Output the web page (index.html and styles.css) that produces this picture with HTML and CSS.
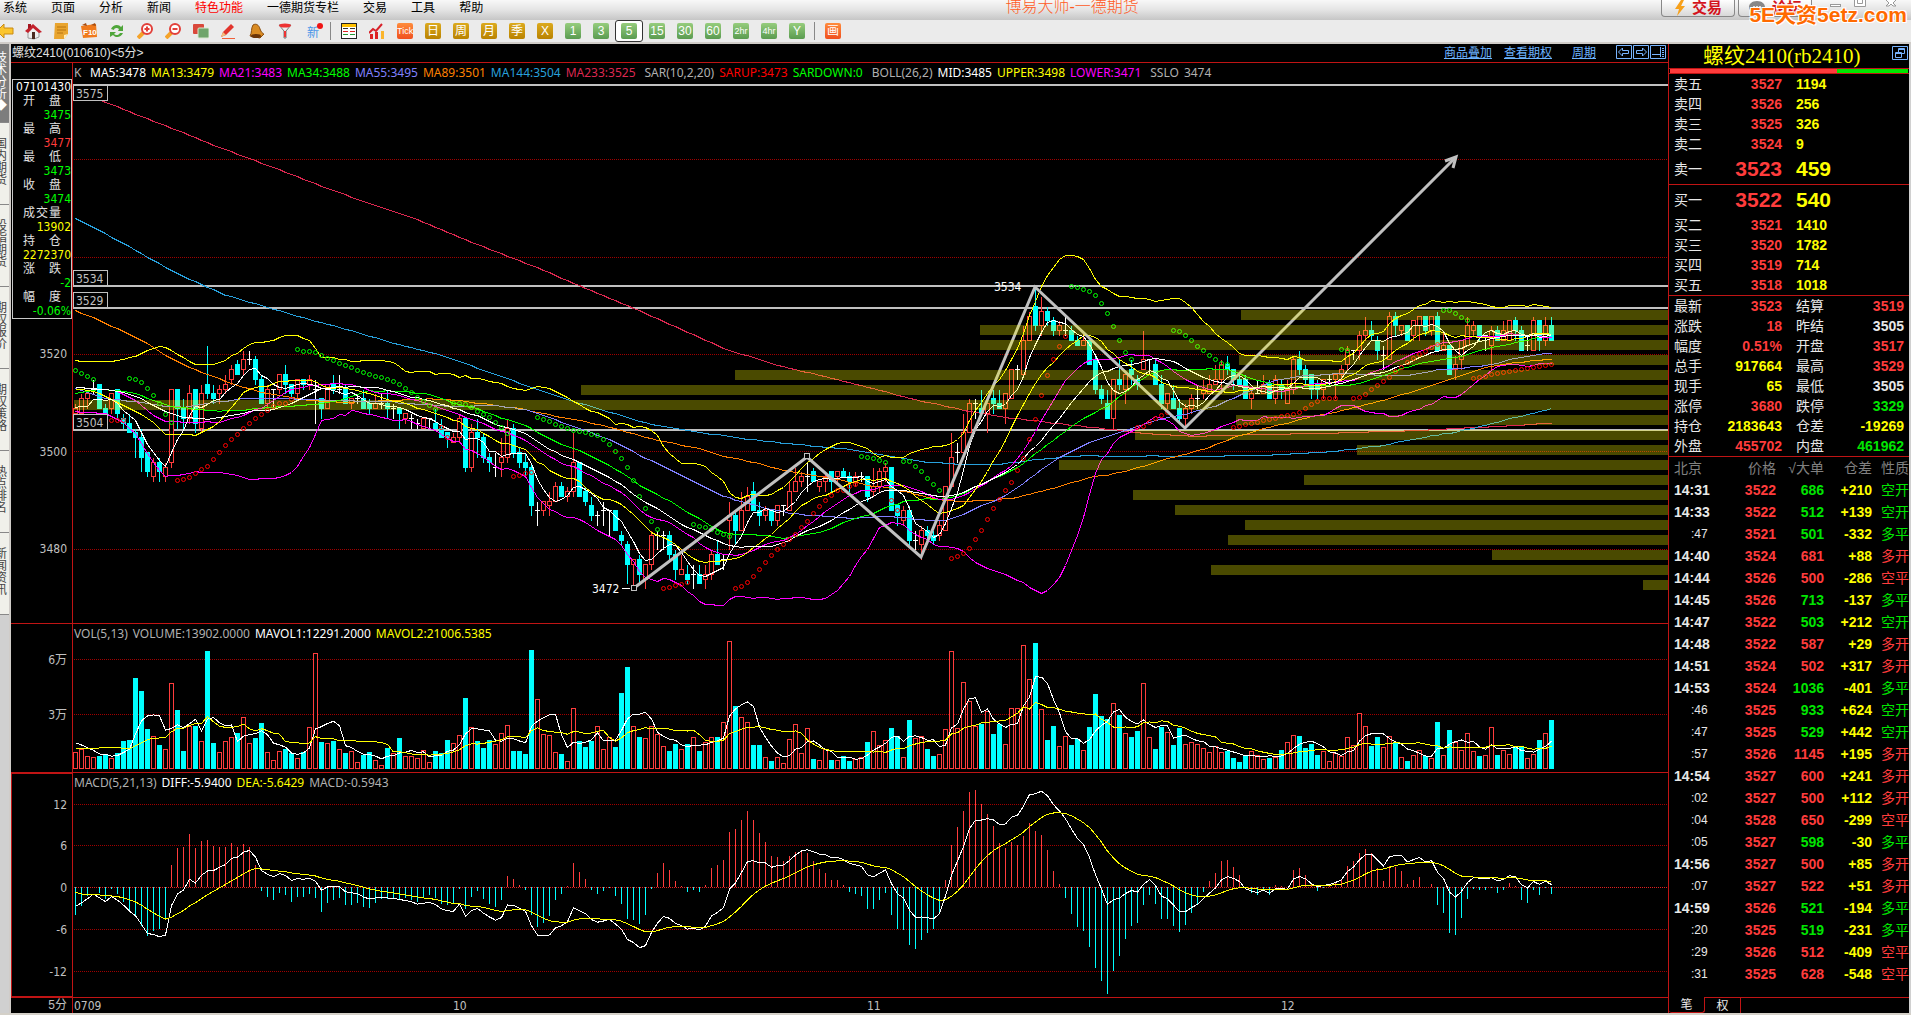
FILE: index.html
```html
<!DOCTYPE html>
<html lang="zh-CN">

<head>
	<meta charset="UTF-8">
	<meta name="viewport" content="width=device-width, initial-scale=1.0">
	<title>博易大师-一德期货</title>
	<link rel="stylesheet" href="styles.css">
</head>

<body>
	<header class="menubar">
		<nav class="menu">
			<a href="#">系统</a>
			<a href="#">页面</a>
			<a href="#">分析</a>
			<a href="#">新闻</a>
			<a href="#" class="hot">特色功能</a>
			<a href="#">一德期货专栏</a>
			<a href="#">交易</a>
			<a href="#">工具</a>
			<a href="#">帮助</a>
		</nav>
		<div class="app-title">博易大师-一德期货</div>
		<div class="window-tools">
			<button class="trade-btn" type="button">
				<svg width="12" height="16" viewBox="0 0 12 16"><path d="M7 0L1 9h4l-2 7 8-10H7l3-6z" fill="#f7a11b"/></svg>交易
			</button>
			<button class="trade-btn" type="button">
				<svg width="18" height="16" viewBox="0 0 18 16"><path d="M9 1c5 0 8 3 8 6s-3 6-7 6l-4 3v-3C3 12 1 10 1 7c0-3 3-6 8-6z" fill="#888"/><path d="M5 7h2M8 7h2M11 7h2" stroke="#ddd" stroke-width="2"/></svg>论坛
			</button>
			<svg class="win-icons" width="84" height="12" viewBox="0 0 84 12" fill="#fff" stroke="#999"><rect x="5.500" y="4.500" width="10" height="2"/><path d="M29.500 0v6.500h11V0M32.500 0v3.500h5V0"/><path d="M61 0l3 3-3 3h3l2-2 2 2h3l-3-3 3-3"/></svg>
		</div>
		<div class="watermark">5E天资5etz.com</div>
	</header>

	<div class="toolbar">
		<button type="button" class="first" title="后退"><svg width="18" height="16" viewBox="0 0 18 16"><path d="M1 8l7-7v4h9v6H8v4z" fill="#fbc52d" stroke="#c98a12"/></svg></button>
		<button type="button" title="首页"><svg width="17" height="17" viewBox="0 0 17 17"><path d="M3 8v7l6 1 5-2V8L8 3z" fill="#eee" stroke="#999"/><path d="M0 8l8-7 9 8-3 1-6-5-5 5z" fill="#c3222c"/><path d="M3 1h3v3L3 6z" fill="#a31620"/><path d="M7 9h3v7H7z" fill="#4a2a20"/></svg></button>
		<button type="button" title="便笺"><svg width="16" height="16" viewBox="0 0 16 16"><path d="M2 0h13v11l-4 5H1z" fill="#e9a52f"/><path d="M4 4h9M4 7h9M4 10h6" stroke="#b87410"/><path d="M11 16v-4l4-1z" fill="#fff0c0"/></svg></button>
		<button type="button" title="F10"><svg width="18" height="16" viewBox="0 0 18 16"><path d="M1 3l15-2 1 13-14 1z" fill="#f07a1c"/><path d="M2 2l4-2 1 3M11 2l4-2 1 3" fill="#a64c10"/><text x="3" y="12" class="f10">F10</text></svg></button>
		<button type="button" title="刷新"><svg width="16" height="16" viewBox="0 0 16 16"><path d="M2 6c2-5 8-5 10-2l2-2v6H9l1-2C8 4 5 5 5 7zM14 10c-2 5-8 5-10 2l-3 2V9h6l-2 2c2 2 5 1 6-1z" fill="#4fa63a"/></svg></button>
		<button type="button" title="放大"><svg width="16" height="16" viewBox="0 0 16 16"><path d="M7 9l-6 6" stroke="#f5a32a" stroke-width="4"/><circle cx="10" cy="6" r="5" fill="#fff" stroke="#e2403a" stroke-width="2"/><path d="M7.500 6h5M10 3.500v5" stroke="#e2403a" stroke-width="2"/></svg></button>
		<button type="button" title="缩小"><svg width="16" height="16" viewBox="0 0 16 16"><path d="M7 9l-6 6" stroke="#f5a32a" stroke-width="4"/><circle cx="10" cy="6" r="5" fill="#fff" stroke="#e2403a" stroke-width="2"/><path d="M7.500 6h5" stroke="#e2403a" stroke-width="2"/></svg></button>
		<button type="button" title="叠加"><svg width="16" height="16" viewBox="0 0 16 16"><rect x="0" y="1" width="11" height="10" rx="1" fill="#d9483b"/><rect x="5" y="5" width="11" height="10" rx="1" fill="#6fa56b" stroke="#d8e8d0"/></svg></button>
		<button type="button" title="画线"><svg width="16" height="16" viewBox="0 0 16 16"><path d="M2 9l8-8 3 3-8 8-5 2z" fill="#e2342c"/><path d="M0 14l2-5 3 3z" fill="#f2c07c"/><path d="M1 15.500h13" stroke="#f0603a"/></svg></button>
		<button type="button" title="预警"><svg width="16" height="16" viewBox="0 0 16 16"><path d="M4 2c3-2 6 0 7 4 1 3 3 5 4 5l-4 4-10-2c2-3 1-8 3-11z" fill="#d98b22" stroke="#8a4c0c"/><ellipse cx="7" cy="13" rx="5" ry="2" fill="#6a3408"/></svg></button>
		<button type="button" title="筛选"><svg width="16" height="16" viewBox="0 0 16 16"><path d="M2 2h12L9 8v7H7V8z" fill="#eee" stroke="#777"/><ellipse cx="8" cy="2.500" rx="6" ry="2" fill="#e33"/><path d="M7 8h2v6H7z" fill="#e33"/></svg></button>
		<button type="button" title="新闻" class="news">新</button>
		<span class="sep"></span>
		<button type="button" title="报价"><svg width="16" height="16" viewBox="0 0 16 16"><rect x=".5" y=".5" width="15" height="15" fill="#fff" stroke="#222"/><path d="M1 2.500h14" stroke="#ffc000" stroke-width="3"/><path d="M2 5.500h5M9 5.500h5" stroke="#333"/><path d="M2 8.500h5M9 8.500h5" stroke="#d22"/><path d="M2 11.500h5M9 11.500h5" stroke="#293"/></svg></button>
		<button type="button" title="走势"><svg width="16" height="16" viewBox="0 0 16 16"><path d="M1 11h3v5H1zM6 9h3v7H6z" fill="#d22"/><path d="M12 8h3v8h-3z" fill="#fbb52d"/><path d="M0 10l4-4 3 2 6-7" stroke="#d8222a" stroke-width="2" fill="none"/></svg></button>
		<button type="button"><i class="tile tile-red small">Tick</i></button>
		<button type="button"><i class="tile tile-gold">日</i></button>
		<button type="button"><i class="tile tile-gold">周</i></button>
		<button type="button"><i class="tile tile-gold">月</i></button>
		<button type="button"><i class="tile tile-gold">季</i></button>
		<button type="button"><i class="tile tile-gold">X</i></button>
		<button type="button"><i class="tile tile-green">1</i></button>
		<button type="button"><i class="tile tile-green">3</i></button>
		<button type="button" class="on"><i class="tile tile-green">5</i></button>
		<button type="button"><i class="tile tile-green">15</i></button>
		<button type="button"><i class="tile tile-green">30</i></button>
		<button type="button"><i class="tile tile-green">60</i></button>
		<button type="button"><i class="tile tile-green small">2hr</i></button>
		<button type="button"><i class="tile tile-green small">4hr</i></button>
		<button type="button"><i class="tile tile-green">Y</i></button>
		<span class="sep"></span>
		<button type="button"><i class="tile tile-red">画</i></button>
	</div>

	<main class="workspace">
		<nav class="side-tabs">
			<a href="#" class="active"><span>技术分析◆</span></a>
			<a href="#"><span>国内期货</span></a>
			<a href="#"><span>股指期货</span></a>
			<a href="#"><span>期权报价</span></a>
			<a href="#"><span>期权策略</span></a>
			<a href="#"><span>热点排名</span></a>
			<a href="#"><span>新闻资讯</span></a>
		</nav>

		<section class="charts">
			<div class="chart-title">
				<span>螺纹2410(010610)&lt;5分&gt;</span>
				<div class="chart-links">
					<a href="#">商品叠加</a>
					<a href="#">查看期权</a>
					<a href="#" class="cycle">周期</a>
					<svg width="51" height="16" viewBox="0 0 51 16" fill="none" stroke="#78b4ff"><path d="M.5 1.500h15v13H.5zM17.500 1.500h15v13h-15zM34.500 1.500h15v13h-15z"/><path d="M2.500 8l4-4v2.500h6v3h-6V12zM30.500 8l-4-4v2.500h-6v3h6V12zM36 10.500h8M44.500 3v10"/><path d="M46 4.500h2M46 6.500h2M46 8.500h2M46 10.500h2M46 12.500h2"/></svg>
				</div>
			</div>

			<div class="panel main-panel">
				<div class="axis">
					<div class="data-window" id="dataWindow"></div>
					<svg id="priceAxis" viewBox="11 319 61 304" preserveAspectRatio="none"></svg>
				</div>
				<div class="plot">
					<div class="legend">
						<span class="gray k">K</span>
						<span class="white">MA5:3478</span>
						<span class="yellow">MA13:3479</span>
						<span class="magenta">MA21:3483</span>
						<span class="green">MA34:3488</span>
						<span class="violet">MA55:3495</span>
						<span class="orange">MA89:3501</span>
						<span class="blue">MA144:3504</span>
						<span class="crimson">MA233:3525</span>
						<span class="gray group">SAR(10,2,20)</span>
						<span class="red">SARUP:3473</span>
						<span class="green">SARDOWN:0</span>
						<span class="gray group">BOLL(26,2)</span>
						<span class="white">MID:3485</span>
						<span class="yellow">UPPER:3498</span>
						<span class="magenta">LOWER:3471</span>
						<span class="gray group">SSLO</span>
						<span class="gray">3474</span>
					</div>
					<svg id="priceChart" viewBox="73 83 1595 540" preserveAspectRatio="none"></svg>
				</div>
			</div>

			<div class="panel vol-panel">
				<div class="axis">
					<svg id="volAxis" viewBox="11 624 61 148" preserveAspectRatio="none"></svg>
				</div>
				<div class="plot">
					<div class="legend">
						<span class="gray">VOL(5,13)</span>
						<span class="gray">VOLUME:13902.0000</span>
						<span class="white">MAVOL1:12291.2000</span>
						<span class="yellow">MAVOL2:21006.5385</span>
					</div>
					<svg id="volChart" viewBox="73 644 1595 128" preserveAspectRatio="none"></svg>
				</div>
			</div>

			<div class="panel macd-panel">
				<div class="axis selected">
					<svg id="macdAxis" viewBox="11 773 61 224" preserveAspectRatio="none"></svg>
				</div>
				<div class="plot">
					<div class="legend">
						<span class="gray">MACD(5,21,13)</span>
						<span class="white">DIFF:-5.9400</span>
						<span class="yellow">DEA:-5.6429</span>
						<span class="gray">MACD:-0.5943</span>
					</div>
					<svg id="macdChart" viewBox="73 793 1595 204" preserveAspectRatio="none"></svg>
				</div>
			</div>

			<div class="time-axis">
				<div class="axis">5分</div>
				<svg id="timeAxis" viewBox="73 998 1595 15" preserveAspectRatio="none"></svg>
			</div>
		</section>

		<aside class="quote">
			<div class="quote-title">
				螺纹2410(rb2410)
				<svg class="restore" width="16" height="14" viewBox="0 0 16 14" fill="none" stroke="#78b4ff"><path d="M.5.5h15v13H.5zM6.500 2.500h6v5h-6zM3.500 6.500h6v5h-6zM6.500 3.500h6M3.500 7.500h6"/></svg>
			</div>
			<div class="ratio"><span class="ratio-sell"></span><span class="ratio-buy"></span></div>
			<table class="book" id="asks"></table>
			<table class="book" id="bids"></table>
			<table class="stats" id="stats"></table>
			<table class="ticks">
				<thead>
					<tr><th>北京</th><th>价格</th><th>√大单</th><th>仓差</th><th>性质</th></tr>
				</thead>
				<tbody id="ticks"></tbody>
			</table>
			<div class="quote-tabs">
				<button type="button" class="active">笔</button>
				<button type="button">权</button>
			</div>
		</aside>
	</main>

	<script src="chart.js"></script>
</body>

</html>
```
FILE: styles.css
```css
* {
	box-sizing: border-box;
}

body {
	margin: 0;
	height: 100vh;
	display: flex;
	flex-direction: column;
	overflow: hidden;
	background: #d4d0c8;
	font-family: "Liberation Sans", "Noto Sans CJK SC", sans-serif;
	font-size: 12px;
	color: #000;
}

a {
	color: inherit;
	text-decoration: none;
}

button {
	font: inherit;
	padding: 0;
	border: none;
	background: none;
	cursor: pointer;
}

svg {
	display: block;
}

/* top menu */
.menubar {
	position: relative;
	flex: none;
	height: 20px;
	display: flex;
	justify-content: space-between;
	background: linear-gradient(#f8f8f8, #e4e4e4 50%, #c6c6c6);
}

.menu {
	display: flex;
	gap: 24px;
	padding-left: 3px;
	line-height: 16px;
	white-space: nowrap;
}

.menu .hot {
	color: #f00;
}

.app-title {
	font-size: 16px;
	line-height: 14px;
	font-weight: 300;
	color: #ff5a1e;
}

.window-tools {
	display: flex;
	gap: 3px;
	width: 250px;
}

.trade-btn {
	display: flex;
	justify-content: center;
	align-items: center;
	gap: 6px;
	width: 74px;
	height: 17px;
	border: 1px solid #888;
	border-top: none;
	border-radius: 0 0 4px 4px;
	background: linear-gradient(#fff, #d8d8d8);
	color: #d4141c;
	font-size: 15px;
	line-height: 14px;
	font-weight: bold;
}

.win-icons {
	margin-left: 10px;
}

.watermark {
	position: absolute;
	right: 4px;
	top: 4px;
	z-index: 2;
	font-size: 21px;
	line-height: 22px;
	font-weight: bold;
	color: #ff6a00;
	text-shadow: 1px 1px #fff, -1px -1px #fff, 1px -1px #fff, -1px 1px #fff;
}

/* icon toolbar */
.toolbar {
	flex: none;
	height: 24px;
	display: flex;
	align-items: center;
	overflow: hidden;
	background: #ebebeb;
	border-bottom: 2px solid #d0ccc8;
}

.toolbar button {
	flex: none;
	width: 28px;
	height: 22px;
	display: flex;
	justify-content: center;
	align-items: center;
}

.toolbar .first {
	margin-left: -9px;
}

.toolbar .on {
	border: 1px solid #333;
	border-radius: 3px;
	background: #fff;
}

.toolbar .news {
	position: relative;
	color: #4a96e8;
}

.toolbar .news::after {
	content: "";
	position: absolute;
	right: 4px;
	top: 3px;
	width: 6px;
	height: 6px;
	border-radius: 50%;
	background: #f01414;
}

.f10 {
	font: bold 8px "Liberation Sans", sans-serif;
	fill: #fff;
}

.sep {
	width: 8px;
	height: 18px;
	background: linear-gradient(#888, #888) 3px 0 / 1px 100% no-repeat;
}

.tile {
	width: 16px;
	height: 16px;
	border-radius: 2px;
	font-style: normal;
	font-size: 12px;
	line-height: 16px;
	text-align: center;
	color: #fff;
}

.tile.small {
	font-size: 9px;
}

.tile-red {
	background: linear-gradient(#ff8c3c, #f0501e);
}

.tile-gold {
	background: linear-gradient(#dcaa1e, #b98200);
}

.tile-green {
	background: linear-gradient(#96cd7d, #5a9b50);
}

/* workspace */
.workspace {
	flex: 1;
	min-height: 0;
	display: flex;
	margin-bottom: 2px;
}

.side-tabs {
	flex: none;
	width: 11px;
	overflow: hidden;
	background: #d0d0d0;
	border-right: 2px solid #d0ccc8;
}

.side-tabs a {
	display: block;
	height: 82px;
	padding-top: 15px;
	background: #f0f0ea;
	border-bottom: 1px solid #888;
	color: #444;
}

.side-tabs span {
	display: block;
	width: 12px;
	margin-left: -5px;
	line-height: 12px;
	word-break: break-all;
}

.side-tabs .active {
	height: 79px;
	padding-top: 8px;
	background: #7d7d7d;
	color: #fff;
}

.charts {
	flex: 1;
	min-width: 0;
	display: flex;
	flex-direction: column;
	background: #000;
	color: #c0c0c0;
}

.chart-title {
	flex: none;
	height: 19px;
	display: flex;
	justify-content: space-between;
	padding: 0 1px;
	border-bottom: 1px solid #c01414;
	line-height: 18px;
	white-space: nowrap;
}

.chart-title span {
	color: #e0e0e0;
}

.chart-links {
	display: flex;
	gap: 12px;
	color: #6eb4ff;
}

.chart-links a {
	text-decoration: underline;
}

.chart-links .cycle {
	margin: 0 8px;
}

.panel {
	display: flex;
	min-height: 0;
	border-bottom: 1px solid #c01414;
}

.main-panel {
	flex: 560 1 0;
}

.vol-panel {
	flex: 148 1 0;
}

.macd-panel {
	flex: 224 1 0;
}

.axis {
	flex: none;
	width: 62px;
	display: flex;
	flex-direction: column;
	border-right: 1px solid #c01414;
}

.axis.selected {
	outline: 1px solid #c01414;
	outline-offset: -1px;
}

.axis svg,
.plot svg {
	flex: 1 1 0;
	width: 100%;
	min-height: 0;
	overflow: visible;
}

.plot {
	flex: 1;
	min-width: 0;
	display: flex;
	flex-direction: column;
}

.legend {
	flex: none;
	height: 20px;
	display: flex;
	gap: 5px;
	overflow: hidden;
	padding-left: 1px;
	font-family: "Noto Sans", "Open Sans", sans-serif;
	line-height: 20px;
	white-space: nowrap;
}

.legend .k {
	width: 11px;
}

.legend .group {
	margin-left: 4px;
}

.gray { color: #b0b0b0; }
.white { color: #fff; }
.yellow { color: #ff0; }
.magenta { color: #f0f; }
.green { color: #0f0; }
.violet { color: #8080ff; }
.orange { color: #ff8000; }
.blue { color: #28a0dc; }
.crimson { color: #dc2850; }
.red { color: #f00; }

.data-window {
	flex: none;
	margin: 16px 0 0 1px;
	height: 240px;
	border: 1px solid #c8c8c8;
	font-family: "DejaVu Sans Condensed", "DejaVu Sans", "Noto Sans CJK SC", sans-serif;
	font-stretch: condensed;
	line-height: 14px;
	text-align: right;
}

.data-window .stamp {
	color: #fff;
}

.data-window .name {
	display: flex;
	justify-content: space-between;
	width: 38px;
	margin-left: 10px;
	color: #e0e0e0;
}

.time-axis {
	flex: none;
	height: 15px;
	display: flex;
}

.time-axis .axis {
	padding-right: 5px;
	line-height: 15px;
	text-align: right;
}

.time-axis svg {
	flex: 1;
	height: 15px;
}

/* chart drawing */
.grid { stroke: #a00000; stroke-dasharray: 1 1; shape-rendering: crispEdges; }
.zero { stroke: #e02020; stroke-dasharray: 1 1; shape-rendering: crispEdges; }
.up { stroke: #ff3c3c; fill: #000; shape-rendering: crispEdges; }
.down { stroke: #0ff; fill: #0ff; shape-rendering: crispEdges; }
.flat { stroke: #fff; fill: none; shape-rendering: crispEdges; }
.line { fill: none; stroke-width: 1; shape-rendering: crispEdges; }
.sar { fill: none; stroke-width: 1; }
.level { stroke: #c0c0c0; stroke-width: 2; shape-rendering: crispEdges; }
.tag { fill: #000; stroke: #c0c0c0; shape-rendering: crispEdges; }
.profile { fill: #ff0; fill-opacity: 0.29; }
.zigzag { fill: none; stroke: #c0c0c0; stroke-width: 3; }
.num {
	font: 12px "DejaVu Sans Condensed", "DejaVu Sans", "Noto Sans CJK SC", sans-serif;
	font-stretch: condensed;
	fill: #c0c0c0;
}
.peak { fill: #fff; }

/* quote panel */
.quote {
	flex: none;
	width: 243px;
	display: flex;
	flex-direction: column;
	background: #000;
	border-left: 1px solid #c01414;
	border-right: 2px solid #d0d0d0;
	font-size: 14px;
	color: #e8e8e8;
}

.quote-title {
	position: relative;
	height: 24px;
	padding-left: 34px;
	font-family: "Liberation Serif", "Noto Sans CJK SC", serif;
	font-size: 21px;
	line-height: 24px;
	color: #ff0;
}

.restore {
	position: absolute;
	right: 1px;
	top: 2px;
}

.ratio {
	display: flex;
	height: 6px;
	padding: 0 1px;
	border-top: 1px solid #c01414;
	border-bottom: 1px solid #c01414;
}

.ratio-sell {
	flex: 168;
	background: #ff3c3c;
}

.ratio-buy {
	flex: 71;
	background: #00e600;
}

.quote table {
	width: 240px;
	table-layout: fixed;
	border-collapse: collapse;
	line-height: 20px;
}

.quote td,
.quote th {
	padding: 0;
	white-space: nowrap;
	font-weight: bold;
}

.quote .label {
	font-weight: normal;
}

.book td,
.stats td {
	height: 20px;
}

.book {
	border-bottom: 1px solid #c01414;
}

.book .label {
	width: 50px;
	padding-left: 5px;
	text-align: left;
}

.book .price {
	width: 63px;
	text-align: right;
	color: #ff3c3c;
}

.book .size {
	padding-left: 14px;
	color: #ff0;
}

.book .best td {
	height: 30px;
}

.book .best .price,
.book .best .size {
	font-size: 21px;
}

.stats {
	border-bottom: 1px solid #c01414;
}

.stats .label {
	width: 37px;
	padding-left: 5px;
	text-align: left;
}

.stats .label.second {
	width: 51px;
	padding-left: 14px;
}

.stats .value {
	text-align: right;
}

.stats .value:last-child {
	padding-right: 5px;
}

.ticks th,
.ticks td {
	height: 22px;
	text-align: right;
}

.ticks th {
	font-weight: normal;
	color: #808080;
}

.ticks th:nth-child(1) { width: 59px; }
.ticks th:nth-child(2) { width: 48px; }
.ticks th:nth-child(3) { width: 48px; }
.ticks th:nth-child(4) { width: 48px; }
.ticks th:nth-child(5) { width: 37px; }

.ticks th:first-child,
.ticks td:first-child {
	padding-left: 5px;
	text-align: left;
}

.ticks td.sec {
	padding-left: 22px;
	font-size: 12px;
	font-weight: normal;
}

.ticks td.kind {
	font-weight: normal;
}

.c-red { color: #ff3c3c; }
.c-green { color: #00e600; }
.c-yellow { color: #ff0; }
.c-white { color: #e8e8e8; }

.quote-tabs {
	height: 16px;
	margin-top: auto;
	display: flex;
	border-top: 1px solid #c01414;
}

.quote-tabs button {
	width: 36px;
	border-right: 1px solid #c01414;
	font-size: 12px;
	line-height: 14px;
	color: #e8e8e8;
}

.quote-tabs .active {
	margin-top: -1px;
	background: #000;
	border-bottom: 1px solid #c01414;
	border-radius: 0 0 3px 3px;
}
```
FILE: chart.js
```js
const NS = 'http://www.w3.org/2000/svg';

// open, high, low, close minus 3400, one group per bar
const raw = `108 110 108 109|108 112 108 111|111 113 109 112|113 115 112 113|114 114 109 109|109 110 108 108|109 112 108 112|113 113 107 108
107 108 105 106|106 108 104 104|104 105 99 103|103 105 96 99|100 100 95 96|95 99 94 98|98 99 94 96|95 98 94 97|98 113 97 113|113 113 105 109
109 111 105 107|107 114 106 112|113 113 104 106|105 114 104 112|114 122 111 112|112 114 110 111|112 114 110 113|113 116 112 114|115 118 114 117
118 119 116 116|117 121 116 119|119 121 118 119|119 120 114 115|115 116 110 110|110 114 109 113|113 113 109 113|113 116 112 116|116 118 112 114
114 114 111 112|112 115 111 115|115 115 113 114|114 116 113 115|113 115 106 113|111 111 107 109|109 114 109 114|114 116 112 113|113 116 112 113
113 114 110 110|110 111 109 111|111 112 110 111|111 113 109 109|110 111 108 109|109 112 109 110|110 112 109 110|110 113 107 109|109 110 107 109
109 109 105 108|107 108 106 108|107 108 105 107|106 107 105 106|105 107 105 107|107 107 105 107|106 109 105 105|105 107 103 103|104 104 101 103
102 104 102 103|103 108 102 107|107 107 96 97|97 106 96 104|104 107 99 103|103 104 98 99|99 100 96 98|97 100 95 97|98 103 95 99|99 107 98 105
105 106 99 100|100 101 97 98|98 100 95 97|97 98 87 89|88 90 85 88|88 90 87 90|89 92 87 90|90 94 90 93|93 94 91 91|91 93 90 92|92 104 91 98
98 98 91 91|92 93 89 90|89 91 86 87|87 88 85 87|88 90 85 88|88 88 83 88|88 88 84 84|83 84 81 82|81 82 73 77|77 78 72 78|78 79 73 75|74 77 72 77
77 84 76 83|83 84 80 83|83 84 80 83|83 84 78 79|79 80 74 76|75 79 75 76|75 77 73 74|75 77 72 75|75 77 73 73|74 77 72 75|75 80 74 79|79 82 77 77
78 79 76 78|86 90 80 87|87 88 81 84|84 92 84 88|88 93 88 91|92 94 88 88|88 90 85 87|87 89 86 88|88 88 85 86|86 89 85 89|89 89 87 89|88 94 88 92
92 97 92 94|94 96 93 95|95 98 92 95|96 97 94 94|93 94 92 94|94 96 92 95|96 96 92 94|95 96 94 96|96 97 95 95|95 96 92 94|94 96 93 95|95 96 94 95
95 95 90 91|92 97 91 93|93 97 92 96|96 98 94 97|97 97 88 88|89 89 85 87|86 89 85 88|88 89 81 82|82 84 80 82|81 85 78 84|84 85 82 83|83 84 81 82
83 86 82 85|84 93 84 93|93 104 93 99|100 102 98 100|100 108 100 104|104 111 104 110|110 111 107 110|109 113 108 108|108 110 104 110
111 113 108 110|110 113 109 109|109 112 106 112|111 117 111 117|117 118 115 117|116 126 116 123|123 129 123 128|130 134 125 126|126 132 124 129
129 130 126 127|127 128 124 125|125 127 124 126|125 128 124 125|125 126 123 123|123 124 122 122|122 125 122 123|123 123 118 118|119 120 112 113
113 114 110 111|110 113 107 107|107 115 105 115|115 119 113 114|113 116 110 116|117 119 114 116|115 116 113 114|117 125 117 119|119 119 116 119
118 119 114 114|114 116 109 110|110 112 109 112|111 114 109 109|109 111 106 107|107 110 105 109|109 112 108 111|111 114 109 111|112 115 111 113
112 116 112 114|114 118 114 115|115 119 112 118|118 120 116 117|117 117 113 115|115 116 114 114|115 116 111 111|111 113 109 112|112 115 112 112
112 116 112 114|114 115 111 111|111 116 110 115|114 115 111 113|110 115 110 113|113 120 112 119|119 121 116 117|117 118 114 115|116 116 111 113
114 115 111 113|113 115 111 115|115 116 114 115|115 116 111 116|116 118 115 117|118 122 117 121|121 121 119 121|121 125 119 124|124 128 123 125
125 127 123 124|123 124 119 121|120 122 117 120|119 129 119 128|128 129 124 126|125 126 124 126|126 126 123 123|124 127 123 127|126 128 123 128
128 128 124 125|125 128 124 128|128 129 121 121|121 125 121 122|122 122 116 116|117 120 115 118|119 123 117 123|122 128 122 126|125 127 124 126
126 126 123 124|124 124 121 124|122 126 117 125|125 126 123 123|123 127 123 125|123 127 123 127|127 128 123 125|125 126 121 121|122 124 121 122
121 128 121 127|127 127 121 123|123 128 122 126|126 128 123 123`;
const bars = raw.split(/[|\n]/).map(s => s.split(' ').map(Number));
const closes = bars.map(b => b[3]);

// tops of the volume bars, three units per pixel
const volTop = [427, 418, 437, 440, 438, 433, 443, 430, 394, 390, 204, 243, 357, 379, 405, 416, 220, 300, 423, 348, 348, 394, 123, 399, 427,
	394, 382, 370, 322, 398, 384, 339, 427, 449, 424, 417, 430, 445, 426, 352, 130, 396, 398, 394, 418, 429, 424, 457, 434, 426, 451, 466, 414,
	430, 384, 439, 439, 445, 421, 457, 423, 430, 390, 400, 376, 264, 352, 393, 414, 390, 403, 370, 346, 423, 423, 432, 120, 268, 373, 376, 427,
	432, 454, 295, 393, 411, 393, 349, 418, 381, 411, 249, 171, 349, 381, 385, 349, 371, 409, 423, 402, 418, 402, 382, 423, 397, 382, 381, 337,
	94, 288, 322, 337, 405, 405, 442, 453, 442, 460, 388, 343, 430, 355, 447, 451, 416, 450, 451, 438, 453, 447, 442, 396, 364, 406, 391, 354,
	378, 442, 330, 385, 379, 417, 438, 433, 358, 124, 355, 217, 274, 348, 342, 304, 372, 342, 403, 295, 295, 106, 208, 99, 298, 390, 348, 409,
	379, 405, 387, 421, 351, 252, 318, 327, 280, 315, 370, 381, 363, 220, 382, 417, 351, 367, 405, 354, 403, 397, 403, 415, 427, 409, 427, 423,
	444, 456, 435, 424, 436, 448, 444, 442, 420, 397, 376, 378, 414, 402, 435, 424, 454, 430, 439, 382, 406, 310, 349, 408, 381, 412, 379, 399,
	442, 453, 436, 421, 438, 445, 336, 436, 360, 397, 421, 370, 424, 438, 436, 352, 435, 421, 433, 411, 409, 445, 433, 390, 370, 330];

// SAR dots: first bar, then y of each dot
const sarDown = [[0, 370, 373, 376, 379], [9, 378, 379, 382, 388, 395, 403, 414, 422],
	[37, 349, 351, 351, 352, 355, 358, 360, 363, 365, 367, 370, 372, 374, 376, 377, 379, 381, 384, 388, 392, 397, 401, 405, 409],
	[63, 403, 403, 404, 407, 411, 414, 417, 422, 427, 433],
	[77, 417, 419, 421, 424, 426, 428, 430, 431, 432, 434, 435, 439, 444, 451, 458, 467, 480, 496, 508, 521, 529],
	[103, 524, 526, 527, 529, 532, 534, 536], [131, 456, 457, 458, 460, 462], [138, 461, 461, 466, 471, 478, 484, 490],
	[166, 286, 287, 289, 291, 295, 303, 313, 326, 340, 352, 359], [183, 330, 331, 335, 340, 346, 350, 355, 359, 363, 364],
	[211, 349, 350], [228, 310, 310, 313, 317, 320]];
const sarUp = [[6, 420, 420, 420], [17, 480, 479, 477, 473, 469, 466, 459, 452, 445, 439, 434, 428, 423, 418, 414, 410, 406, 403, 403, 399],
	[61, 427, 437], [73, 476, 475, 473, 472], [98, 588, 587, 585, 584, 582],
	[110, 588, 586, 582, 576, 569, 562, 555, 549, 544, 539, 534, 527, 521, 513, 506, 500, 495, 490, 490, 486, 484], [136, 500, 510],
	[146, 558, 556, 553, 548, 539, 530, 519, 508, 499, 490, 482, 470, 458, 439, 419, 395, 375, 359, 346, 336],
	[177, 427, 426, 422, 418, 415, 412],
	[193, 427, 426, 424, 423, 422, 420, 419, 418, 416, 415, 414, 412, 408, 404, 401, 398, 398, 398],
	[213, 398, 397, 394, 389, 385, 381, 377, 371, 367, 362, 358, 354, 351, 347, 344],
	[233, 378, 377, 376, 374, 373, 372, 371, 370, 369, 368, 367, 366, 365, 364]];

// averages before enough bars are loaded: bar, value pairs
const lead = {
	ma5: [[0, 109.2], [2, 109.5], [3, 110.8]],
	ma13: [[0, 113], [3, 112.6], [7, 110.2], [9, 109], [11, 107.7]],
	ma21: [[0, 113.3], [4, 113], [7, 112.5], [10, 110.6], [13, 107.5], [15, 106.4], [19, 106.1]],
	ma34: [[0, 112], [4, 113], [8, 112.6], [10, 112.1], [13, 110.6], [16, 109.4], [20, 108.9], [24, 108.5], [28, 108.7], [32, 109.2]],
	ma55: [[0, 113.2], [5, 111], [10, 110.4], [15, 109.5], [18, 109.3], [24, 110.4], [28, 111], [36, 111], [45, 110.6], [53, 110.4]],
	ma89: [[0, 129.1], [3, 127.6], [9, 124.3], [13, 121.6], [15, 119.9], [19, 117.5], [23, 115.5], [27, 113.8], [31, 112.3], [36, 111.2],
		[41, 110.4], [46, 110.3], [53, 110.7], [59, 111], [64, 110.6], [69, 109.8], [74, 109], [81, 107.2], [87, 105.8]],
	ma144: [[0, 148.1], [8, 142.9], [15, 138], [21, 134.4], [25, 132.3], [33, 129.4], [38, 127.6], [45, 125.3], [54, 122.1], [61, 119.9],
		[68, 116.9], [75, 113.8], [81, 111.2], [90, 107.9], [96, 105.7], [104, 104.1], [114, 102.4], [128, 100.7], [134, 99.5], [142, 98]],
	ma233: [[0, 174.5], [5, 171.9], [17, 166.1], [24, 162.6], [30, 159.9], [43, 153.7], [57, 147.8], [66, 143.2], [77, 137.9], [84, 134.2],
		[93, 129.6], [101, 125.2], [108, 121.4], [116, 118.2], [124, 115.8], [131, 113.7], [140, 110.8], [149, 108.4], [155, 107.2],
		[163, 106], [171, 104.9], [177, 104], [186, 103.3], [199, 103.7], [211, 104], [224, 104.5], [230, 104.9], [240, 105.5], [246, 106]],
	mid: [[0, 113.4], [4, 113], [8, 112.3], [11, 111], [15, 108.3], [18, 107.2], [22, 106.8], [24, 107.1]],
	upper: [[0, 118.8], [3, 118.6], [7, 118.8], [9, 119.5], [10, 119.6], [12, 121], [14, 121.8], [15, 121.6], [17, 120.2], [20, 118], [23, 118], [24, 118.5]],
	lower: [[0, 108.3], [5, 108], [8, 106.2], [10, 103.8], [12, 99.7], [14, 96.3], [15, 95.1], [18, 95.4], [20, 96], [24, 95.8]],
	vol5: [[0, 398], [1, 405], [3, 421]],
	vol13: [[0, 415], [4, 414], [6, 412], [9, 416], [11, 398]]
};

const xOf = i => 75.5 + i * 6;
const yOf = p => Math.round(354.5 - (p - 120) * 4.87) + 0.5;
const yMacd = v => 887.5 - v * 6.97;

function el(parent, name, attrs, text) {
	const node = document.createElementNS(NS, name);
	for (const key in attrs) node.setAttribute(key, attrs[key]);
	if (text) node.textContent = text;
	parent.appendChild(node);
	return node;
}

function leadValue(points, i) {
	for (let k = 1; k < points.length; k++) {
		const [x0, y0] = points[k - 1];
		const [x1, y1] = points[k];
		if (i <= x1) return y0 + (y1 - y0) * (i - x0) / (x1 - x0);
	}
	return null;
}

function average(data, n, points) {
	return data.map((_, i) => {
		const v = leadValue(points, i);
		if (v !== null) return v;
		let sum = 0;
		for (let k = Math.max(0, i - n + 1); k <= i; k++) sum += data[k];
		return sum / Math.min(n, i + 1);
	});
}

function band(n, sign, points) {
	return closes.map((_, i) => {
		const v = leadValue(points, i);
		if (v !== null) return v;
		const part = closes.slice(i - n + 1, i + 1);
		const m = part.reduce((a, b) => a + b) / n;
		const dev = Math.sqrt(part.reduce((a, b) => a + (b - m) * (b - m), 0) / (n - 1));
		return m + sign * 2 * dev;
	});
}

function line(svg, values, color, toY) {
	const pts = values.map((v, i) => xOf(i) + ',' + toY(v).toFixed(1)).join(' ');
	el(svg, 'polyline', { points: pts, class: 'line', stroke: color });
}

function grid(svg, ys) {
	ys.forEach(y => el(svg, 'line', { x1: 74, x2: 1668, y1: y, y2: y, class: 'grid' }));
}

function labels(id, items) {
	const svg = document.getElementById(id);
	items.forEach(([t, y]) => el(svg, 'text', { x: 67, y: y + 4, class: 'num', 'text-anchor': 'end' }, t));
}

function drawPrice() {
	const svg = document.getElementById('priceChart');
	grid(svg, [159.5, 257.5, 354.5, 451.5, 549.5]);
	[85, 286, 308, 430].forEach(y => el(svg, 'line', { x1: 73, x2: 1668, y1: y, y2: y, class: 'level' }));

	bars.forEach(([o, h, l, c], i) => {
		const x = xOf(i);
		const type = c > o ? 'up' : c < o ? 'down' : 'flat';
		const top = yOf(Math.max(o, c));
		const bottom = yOf(Math.min(o, c));
		el(svg, 'line', { x1: x, x2: x, y1: yOf(h), y2: yOf(l), class: type });
		if (type === 'flat') {
			el(svg, 'line', { x1: x - 2.5, x2: x + 2.5, y1: top, y2: top, class: type });
		} else {
			el(svg, 'rect', { x: x - 2, y: top, width: 4, height: bottom - top, class: type });
		}
	});

	line(svg, average(closes, 233, lead.ma233), '#dc2850', yOf);
	line(svg, average(closes, 144, lead.ma144), '#28a0dc', yOf);
	line(svg, average(closes, 89, lead.ma89), '#ff8000', yOf);
	line(svg, average(closes, 55, lead.ma55), '#8080ff', yOf);
	line(svg, average(closes, 34, lead.ma34), '#00ff00', yOf);
	line(svg, average(closes, 21, lead.ma21), '#ff00ff', yOf);
	line(svg, average(closes, 13, lead.ma13), '#ffff00', yOf);
	line(svg, average(closes, 5, lead.ma5), '#ffffff', yOf);
	line(svg, average(closes, 26, lead.mid), '#ffffff', yOf);
	line(svg, band(26, 1, lead.upper), '#ffff00', yOf);
	line(svg, band(26, -1, lead.lower), '#ff00ff', yOf);

	[[sarDown, '#00ff00'], [sarUp, '#ff0000']].forEach(([runs, color]) => {
		runs.forEach(([start, ...ys]) => ys.forEach((y, k) => {
			el(svg, 'ellipse', { cx: xOf(start + k), cy: y + 0.5, rx: 2, ry: 2, class: 'sar', stroke: color });
		}));
	});

	// drawn trend lines
	el(svg, 'polyline', { points: '634,588 807,457 921,557 1035,287 1185,428 1455,158', class: 'zigzag' });
	el(svg, 'path', { d: 'M1445 161L1456 157L1453 168', class: 'zigzag' });
	el(svg, 'rect', { x: 631.5, y: 585.5, width: 5, height: 5, class: 'tag' });
	el(svg, 'rect', { x: 804.5, y: 453.5, width: 5, height: 5, class: 'tag' });
	el(svg, 'line', { x1: 622, x2: 630, y1: 588.5, y2: 588.5, class: 'flat' });
	el(svg, 'text', { x: 592, y: 593, class: 'num peak' }, '3472');
	el(svg, 'text', { x: 994, y: 291, class: 'num peak' }, '3534');

	[[3575, 85.5], [3534, 270.5], [3529, 292.5], [3504, 414.5]].forEach(([p, y]) => {
		el(svg, 'rect', { x: 73.5, y: y, width: 34, height: 15, class: 'tag' });
		el(svg, 'text', { x: 76, y: y + 12, class: 'num' }, p);
	});

	// volume by price
	[1241, 980, 980, 1239, 735, 581, 74, 1236, 1135, 1357, 1059, 1304, 1133, 1175, 1245, 1228, 1492, 1211, 1643].forEach((x, k) => {
		el(svg, 'rect', { x: x, y: 310 + k * 15, width: 1668 - x, height: 10, class: 'profile' });
	});
	labels('priceAxis', [['3520', 354], ['3500', 452], ['3480', 549]]);
}

function drawVolume() {
	const svg = document.getElementById('volChart');
	grid(svg, [659.5, 714.5]);
	const toY = t => 610 + t / 3;
	volTop.forEach((t, i) => {
		const y = Math.round(toY(t)) + 0.5;
		const type = bars[i][3] < bars[i][0] ? 'down' : 'up';
		el(svg, 'rect', { x: xOf(i) - 2, y: y, width: 4, height: 768.5 - y, class: type });
	});
	line(svg, average(volTop, 5, lead.vol5), '#ffffff', toY);
	line(svg, average(volTop, 13, lead.vol13), '#ffff00', toY);
	labels('volAxis', [['6万', 660], ['3万', 715]]);
}

function drawMacd() {
	const svg = document.getElementById('macdChart');
	grid(svg, [804.5, 845.5, 929.5, 971.5]);
	el(svg, 'line', { x1: 74, x2: 1668, y1: 887.5, y2: 887.5, class: 'zero' });
	let fast = 110;
	let slow = 112.7;
	let signal = -0.7;
	const diff = [];
	const dea = [];
	closes.forEach((c, i) => {
		if (i > 0) {
			fast += (c - fast) * 2 / 6;
			slow += (c - slow) * 2 / 22;
			signal += (fast - slow - signal) * 2 / 14;
		}
		diff.push(fast - slow);
		dea.push(signal);
		const m = 2 * (fast - slow - signal);
		el(svg, 'line', { x1: xOf(i), x2: xOf(i), y1: 887, y2: yMacd(m), class: m > 0 ? 'up' : 'down' });
	});
	line(svg, diff, '#ffffff', yMacd);
	line(svg, dea, '#ffff00', yMacd);
	labels('macdAxis', [['12', 805], ['6', 846], ['0', 888], ['-6', 930], ['-12', 972]]);
}

function drawTime() {
	const svg = document.getElementById('timeAxis');
	[['0709', 74], ['10', 453], ['11', 867], ['12', 1281]].forEach(([t, x]) => {
		el(svg, 'text', { x: x, y: 1010, class: 'num' }, t);
	});
}

function fillDataWindow() {
	const rows = [['开盘', '3475', 'green'], ['最高', '3477', 'c-red'], ['最低', '3473', 'green'], ['收盘', '3474', 'green'],
		['成交量', '13902', 'yellow'], ['持仓', '2272370', 'yellow'], ['涨跌', '-2', 'green'], ['幅度', '-0.06%', 'green']];
	document.getElementById('dataWindow').innerHTML = '<div class="stamp">07101430</div>' + rows.map(([n, v, c]) =>
		`<div class="name">${[...n].map(s => `<span>${s}</span>`).join('')}</div><div class="${c}">${v}</div>`).join('');
}

function fillBook(id, rows) {
	document.getElementById(id).innerHTML = rows.map(([n, p, s]) =>
		`<tr class="${n.endsWith('一') ? 'best' : ''}"><th class="label">${n}</th><td class="price">${p}</td><td class="size">${s}</td></tr>`).join('');
}

function fillStats() {
	const rows = ['最新 3523 red 结算 3519 red', '涨跌 18 red 昨结 3505 white', '幅度 0.51% red 开盘 3517 red', '总手 917664 yellow 最高 3529 red',
		'现手 65 yellow 最低 3505 white', '涨停 3680 red 跌停 3329 green', '持仓 2183643 yellow 仓差 -19269 yellow', '外盘 455702 red 内盘 461962 green'];
	document.getElementById('stats').innerHTML = rows.map(r => {
		const [a, b, c, d, e, f] = r.split(' ');
		return `<tr><th class="label">${a}</th><td class="value c-${c}">${b}</td><th class="label second">${d}</th><td class="value c-${f}">${e}</td></tr>`;
	}).join('');
}

function fillTicks() {
	const rows = `14:31 3522 686 +210 空开,14:33 3522 512 +139 空开,:47 3521 501 -332 多平,14:40 3524 681 +88 多开,14:44 3526 500 -286 空平
14:45 3526 713 -137 多平,14:47 3522 503 +212 空开,14:48 3522 587 +29 多开,14:51 3524 502 +317 多开,14:53 3524 1036 -401 多平
:46 3525 933 +624 空开,:47 3525 529 +442 空开,:57 3526 1145 +195 多开,14:54 3527 600 +241 多开,:02 3527 500 +112 多开
:04 3528 650 -299 空平,:05 3527 598 -30 多平,14:56 3527 500 +85 多开,:07 3527 522 +51 多开,14:59 3526 521 -194 多平
:20 3525 519 -231 多平,:29 3526 512 -409 空平,:31 3525 628 -548 空平`.split(/[,\n]/);
	document.getElementById('ticks').innerHTML = rows.map(r => {
		const [t, p, s, d, k] = r.split(' ');
		const c = k === '空开' || k === '多平' ? 'c-green' : 'c-red';
		return `<tr><td class="${t[0] === ':' ? 'sec' : ''}">${t}</td><td class="c-red">${p}</td><td class="${c}">${s}</td><td class="c-yellow">${d}</td><td class="kind ${c}">${k}</td></tr>`;
	}).join('');
}

drawPrice();
drawVolume();
drawMacd();
drawTime();
fillDataWindow();
fillBook('asks', [['卖五', 3527, 1194], ['卖四', 3526, 256], ['卖三', 3525, 326], ['卖二', 3524, 9], ['卖一', 3523, 459]]);
fillBook('bids', [['买一', 3522, 540], ['买二', 3521, 1410], ['买三', 3520, 1782], ['买四', 3519, 714], ['买五', 3518, 1018]]);
fillStats();
fillTicks();
```
